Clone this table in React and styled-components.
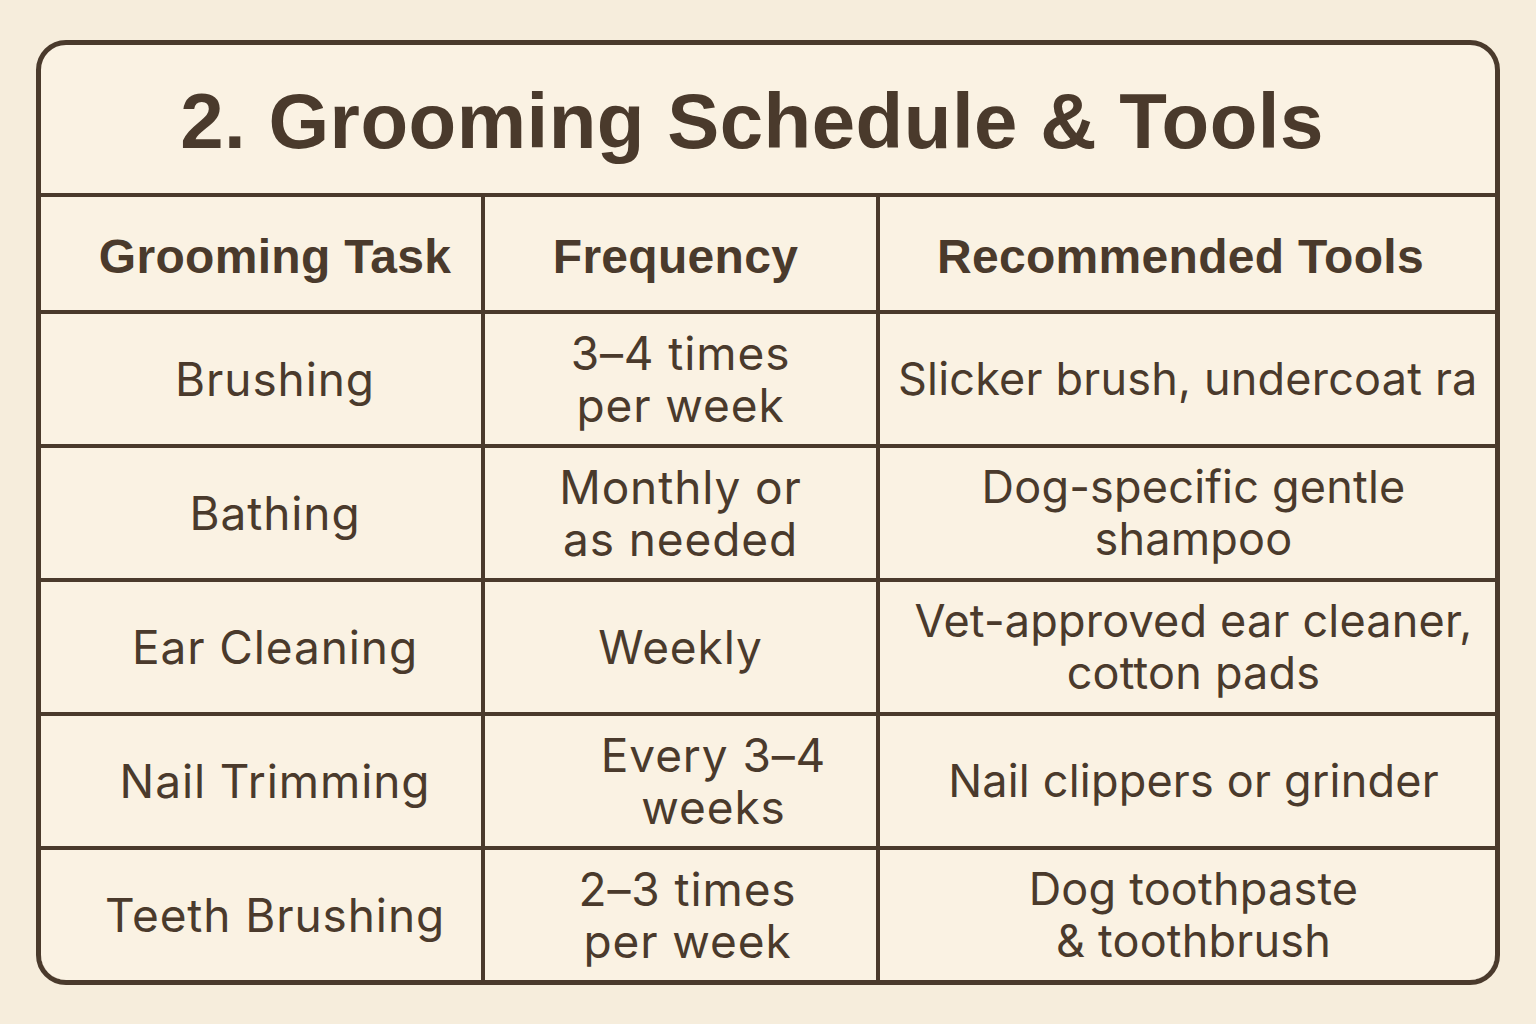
import React from "react";
import styled, { createGlobalStyle } from "styled-components";

const Global = createGlobalStyle`
  html, body { margin: 0; padding: 0; }
  body {
    background: #f6eddc;
    width: 1536px;
    height: 1024px;
    overflow: hidden;
    font-family: Inter, "Noto Sans", sans-serif;
    color: #4a3a2c;
  }
`;

const Page = styled.div`
  padding: 40px 0 0 36px;
`;

const Card = styled.div`
  width: 1464px;
  height: 945px;
  box-sizing: border-box;
  border: 5px solid #4a3a2c;
  border-radius: 30px;
  overflow: hidden;
  background: #faf2e3;
  display: flex;
  flex-direction: column;
`;

const Title = styled.h1`
  margin: 0;
  height: 152px;
  flex: none;
  display: flex;
  align-items: center;
  justify-content: center;
  padding: 5px 32px 0 0;
  box-sizing: border-box;
  border-bottom: 4px solid #4a3a2c;
  font-family: "Liberation Sans", Arial, sans-serif;
  font-weight: 700;
  font-size: 78px;
  letter-spacing: 0.5px;
  color: #4a3a2c;
`;

const Grid = styled.div`
  flex: 1;
  display: grid;
  grid-template-columns: 440px 391px 615px;
  grid-template-rows: 113px repeat(5, 1fr);
  gap: 4px;
  background: #4a3a2c;
`;

const Cell = styled.div`
  background: #faf2e3;
  display: flex;
  align-items: center;
  justify-content: center;
  text-align: center;
  overflow: hidden;
  white-space: ${(p) => (p.$nowrap ? "nowrap" : "normal")};
  padding-left: ${(p) => p.$left || 0}px;
  padding-right: ${(p) => p.$right || 0}px;
  box-sizing: border-box;
  font-size: 46px;
  letter-spacing: 0.9px;
  line-height: 52px;
  color: #4a3a2c;
`;

const ToolCell = styled(Cell)`
  font-size: 45px;
  letter-spacing: 0.2px;
  justify-content: ${(p) => (p.$nowrap ? "flex-start" : "center")};
`;

const HeadCell = styled(Cell)`
  font-family: "Liberation Sans", Arial, sans-serif;
  font-weight: 700;
  font-size: 48px;
  letter-spacing: 0.3px;
  padding-top: 6px;
`;

const rows = [
  ["Brushing", ["3–4 times", "per week"], ["Slicker brush, undercoat ra"], 0, true],
  ["Bathing", ["Monthly or", "as needed"], ["Dog-specific gentle", "shampoo"], 0],
  ["Ear Cleaning", ["Weekly"], ["Vet-approved ear cleaner,", "cotton pads"], 0],
  ["Nail Trimming", ["Every 3–4", "weeks"], ["Nail clippers or grinder"], 66],
  ["Teeth Brushing", ["2–3 times", "per week"], ["Dog toothpaste", "& toothbrush"], 14],
];

const Lines = ({ lines }) =>
  lines.map((l, i) => (
    <React.Fragment key={i}>
      {i > 0 && <br />}
      {l}
    </React.Fragment>
  ));

export default function App() {
  return (
    <>
      <Global />
      <Page>
        <Card>
          <Title>2. Grooming Schedule &amp; Tools</Title>
          <Grid>
            <HeadCell $left={28}>Grooming Task</HeadCell>
            <HeadCell $right={10}>Frequency</HeadCell>
            <HeadCell $right={14}>Recommended Tools</HeadCell>
            {rows.map(([task, freq, tools, shift, nowrap], i) => (
              <React.Fragment key={i}>
                <Cell $left={28}>{task}</Cell>
                <Cell $left={shift}>
                  <span>
                    <Lines lines={freq} />
                  </span>
                </Cell>
                <ToolCell $nowrap={nowrap} $left={nowrap ? 18 : 12}>
                  <span>
                    <Lines lines={tools} />
                  </span>
                </ToolCell>
              </React.Fragment>
            ))}
          </Grid>
        </Card>
      </Page>
    </>
  );
}
